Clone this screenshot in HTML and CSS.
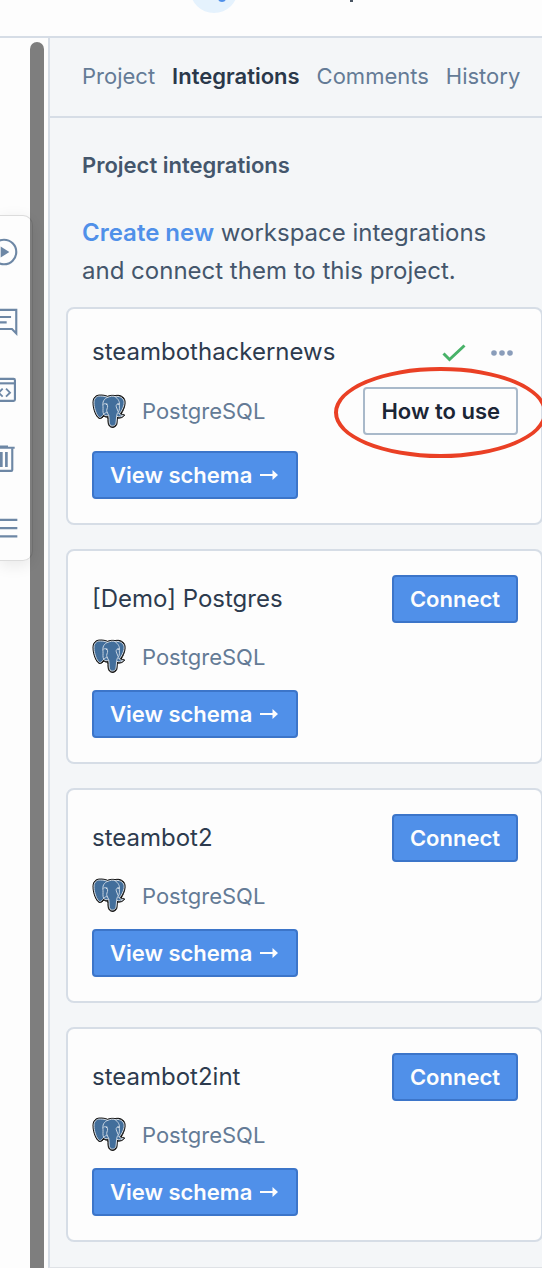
FILE: index.html
```html
<!DOCTYPE html>
<html lang="en">
<head>
<meta charset="utf-8">
<meta name="viewport" content="width=device-width, initial-scale=1">
<title>Project integrations</title>
<link rel="stylesheet" href="styles.css">
</head>
<body>
<svg class="defs" aria-hidden="true">
  <symbol id="postgres" viewBox="0 0 102 105">
    <path fill="#111" stroke="#111" stroke-width="3" stroke-linejoin="round" d="M25 3C9 3 2 13 3 29C4 47 12 68 21 73C27 76 33 69 36 66C38 69 43 70 47 69C49 79 46 91 53 97C61 104 73 99 75 89L76 72C84 74 94 70 98 63C95 60 91 62 87 61C94 50 101 34 99 21C97 8 83 1 69 5C63 3 53 4 47 7C40 4 32 3 25 3Z"/>
    <path fill="#426e9b" stroke="#d5dee8" stroke-width="3" stroke-linejoin="round" d="M25 6C11 6 5 15 6 29C7 45 14 65 22 70C27 72 31 65 35 61C39 66 44 66 50 64C53 76 49 87 55 94C61 99 71 95 72 87L74 67C83 70 90 68 94 64C89 64 84 64 82 60C90 50 98 33 96 22C94 11 81 5 69 8C62 5 54 7 47 10C40 7 32 6 25 6Z"/>
    <g fill="none" stroke="#c6d3e0" stroke-width="3" stroke-linecap="round" stroke-linejoin="round">
      <path d="M47 10C35 15 31 24 33 37C34 47 31 53 35 61M33 31C39 27 46 29 47 36C47 43 42 47 45 54L50 64M35 61C39 56 43 55 46 56"/>
      <path d="M69 8C79 14 84 24 82 34C82 41 84 47 78 56L82 60M82 32C75 28 71 32 73 39L78 52M74 67C75 60 75 57 78 56"/>
    </g>
    <path fill="#e9eef4" d="M40 29L47 29L45 34ZM75 29L81 28L79 33Z"/>
  </symbol>
  <symbol id="arrow" viewBox="0 0 18 12">
    <path d="M0 5.100H12.500V1L18 6L12.500 11V6.900H0Z"/>
  </symbol>
</svg>

<header class="topbar">
  <div class="avatar"><span class="avatar-mark"></span></div>
  <span class="topbar-mark"></span>
</header>

<div class="workspace">
  <div class="canvas">
    <nav class="toolbar" aria-label="Cell actions">
      <button class="tool" aria-label="Run"><svg viewBox="0 0 24 24"><circle cx="12" cy="12" r="9.200" fill="none" stroke="currentColor" stroke-width="1.600"/><path d="M9.500 7.800v8.400l6.500-4.200z"/></svg></button>
      <button class="tool" aria-label="Comment"><svg viewBox="0 0 24 24"><path d="M2.800 3.700H21.200V21.300L18 18H2.800ZM6 9H17.300M6 13H14" fill="none" stroke="currentColor" stroke-width="1.600"/></svg></button>
      <button class="tool" aria-label="Code"><svg viewBox="0 0 24 24"><g fill="none" stroke="currentColor" stroke-width="1.600"><rect x="3.700" y="3.700" width="16.500" height="16.500" rx="1"/><path d="M3.700 7H20.200"/><path d="M11 11L8 14L11 17M13.500 11L16.500 14L13.500 17" stroke-width="1.400"/></g></svg></button>
      <button class="tool" aria-label="Delete"><svg viewBox="0 0 24 24"><path d="M9 1.900h6v1h5v1.500H4V2.900h5zM9 6.800h2v11.200H9zM12.800 6.800h2v11.200h-2z"/><path d="M5.800 4v16.200q0 .7.7.7h11q.7 0 .7-.7V4" fill="none" stroke="currentColor" stroke-width="1.600"/></svg></button>
      <button class="tool" aria-label="Menu"><svg viewBox="0 0 24 24"><path d="M2 5h20v1.700H2zm0 6.200h20v1.700H2zm0 6.200h20v1.700H2z"/></svg></button>
    </nav>
    <div class="scrollbar"></div>
  </div>

  <aside class="panel">
    <nav class="tabs">
      <a class="tab" href="#project">Project</a>
      <a class="tab tab-active" href="#integrations" aria-current="page">Integrations</a>
      <a class="tab" href="#comments">Comments</a>
      <a class="tab" href="#history">History</a>
    </nav>

    <main class="content">
      <div class="intro">
        <h1 class="heading">Project integrations</h1>
        <p class="lead"><a class="link" href="#new">Create new</a> workspace integrations and connect them to this project.</p>
      </div>

      <section class="card">
        <div class="row">
          <h2 class="name">steambothackernews</h2>
          <div class="status">
            <svg class="check" viewBox="0 0 24 18" role="img" aria-label="Connected"><path d="M1.500 9.500L7.500 15.500L22.500 1.500"/></svg>
            <button class="more" aria-label="More options"><svg viewBox="0 0 22 6"><circle cx="3" cy="3" r="2.800"/><circle cx="11" cy="3" r="2.800"/><circle cx="19" cy="3" r="2.800"/></svg></button>
          </div>
        </div>
        <div class="row">
          <div class="kind"><svg class="logo" aria-hidden="true"><use href="#postgres"/></svg>PostgreSQL</div>
          <div class="marked"><button class="btn btn-plain">How to use</button><span class="ring"></span></div>
        </div>
        <button class="btn">View schema<svg class="arrow" aria-hidden="true"><use href="#arrow"/></svg></button>
      </section>

      <section class="card">
        <div class="row"><h2 class="name">[Demo] Postgres</h2><button class="btn">Connect</button></div>
        <div class="kind"><svg class="logo" aria-hidden="true"><use href="#postgres"/></svg>PostgreSQL</div>
        <button class="btn">View schema<svg class="arrow" aria-hidden="true"><use href="#arrow"/></svg></button>
      </section>

      <section class="card">
        <div class="row"><h2 class="name">steambot2</h2><button class="btn">Connect</button></div>
        <div class="kind"><svg class="logo" aria-hidden="true"><use href="#postgres"/></svg>PostgreSQL</div>
        <button class="btn">View schema<svg class="arrow" aria-hidden="true"><use href="#arrow"/></svg></button>
      </section>

      <section class="card">
        <div class="row"><h2 class="name">steambot2int</h2><button class="btn">Connect</button></div>
        <div class="kind"><svg class="logo" aria-hidden="true"><use href="#postgres"/></svg>PostgreSQL</div>
        <button class="btn">View schema<svg class="arrow" aria-hidden="true"><use href="#arrow"/></svg></button>
      </section>
    </main>
  </aside>
</div>
</body>
</html>
```
FILE: styles.css
```css
* { box-sizing: border-box; }

body {
  margin: 0;
  min-height: 100vh;
  display: flex;
  flex-direction: column;
  overflow-x: hidden;
  background: #fdfdfd;
  color: #2d3b4e;
  font-family: Inter, "Liberation Sans", sans-serif;
  font-size: 22px;
  font-optical-sizing: none;
}

h1, h2, p { margin: 0; }
button { font: inherit; cursor: pointer; }
a { text-decoration: none; }
.defs { position: absolute; width: 0; height: 0; }

.topbar {
  position: relative;
  height: 38px;
  border-bottom: 2px solid #d6dde6;
  overflow: hidden;
}
.avatar {
  position: absolute;
  left: 190px;
  top: -35px;
  width: 48px;
  height: 48px;
  border-radius: 50%;
  background: #e5f2fd;
}
.avatar-mark {
  position: absolute;
  left: 28px;
  top: 29px;
  width: 8px;
  height: 8px;
  border-radius: 50%;
  background: #5090e9;
}
.topbar-mark {
  position: absolute;
  left: 350px;
  top: 0;
  width: 3px;
  height: 2px;
  background: #4a5563;
}

.workspace { display: flex; flex: 1; }

.canvas {
  position: relative;
  flex: 0 0 48px;
  overflow: hidden;
}
.toolbar {
  display: flex;
  flex-direction: column;
  align-items: flex-end;
  gap: 37px;
  width: 33px;
  margin-top: 177px;
  padding: 20px 12px 16px 0;
  border: 1px solid #dcdcdc;
  border-left: 0;
  border-radius: 0 10px 10px 0;
  background: #fdfdfd;
  box-shadow: 0 4px 16px rgba(0, 0, 0, 0.09);
}
.tool {
  width: 32px;
  height: 32px;
  padding: 0;
  border: 0;
  background: none;
  color: #6d87a5;
}
.tool svg { display: block; width: 32px; height: 32px; fill: currentColor; }
.scrollbar {
  position: absolute;
  top: 4px;
  bottom: 0;
  right: 4px;
  width: 14px;
  border-radius: 7px 7px 0 0;
  background: rgba(0, 0, 0, 0.5);
}

.panel {
  flex: 1;
  min-width: 0;
  border-left: 2px solid #d6dde6;
  border-bottom: 1px solid #dfe2e6;
  background: #f4f6f8;
}
.tabs {
  display: flex;
  align-items: center;
  gap: 17px;
  height: 80px;
  padding: 0 0 2px 32px;
  border-bottom: 2px solid #d6dde6;
}
.tab { color: #647b96; }
.tab-active { color: #2a384a; font-weight: 600; }

.content {
  display: flex;
  flex-direction: column;
  gap: 24px;
  padding: 32px 0 24px 16px;
}
.intro { padding: 0 16px; margin-bottom: -7px; }
.heading {
  margin-bottom: 34px;
  color: #44566c;
  font-size: 22px;
  line-height: 30px;
  font-weight: 600;
}
.lead {
  max-width: 420px;
  color: #44566c;
  font-size: 24px;
  line-height: 38px;
}
.link { color: #5090e9; font-weight: 600; }

.card {
  display: flex;
  flex-direction: column;
  align-items: flex-start;
  gap: 16px;
  margin-right: -1px;
  padding: 24px 23px 24px 24px;
  border: 2px solid #d6dde6;
  border-radius: 8px;
  background: #fdfdfd;
}
.row {
  display: flex;
  align-items: center;
  justify-content: space-between;
  width: 100%;
}
.name { font-size: 24px; line-height: 38px; font-weight: 400; }
.kind {
  display: flex;
  align-items: center;
  gap: 16px;
  height: 35px;
  color: #647b96;
}
.logo { width: 34px; height: 35px; }
.status { display: flex; align-items: center; gap: 25px; padding: 1px 5px 0 0; }
.check { width: 24px; height: 18px; fill: none; stroke: #48b268; stroke-width: 3; }
.more { padding: 0; border: 0; background: none; }
.more svg { display: block; width: 22px; height: 6px; fill: #8a9dba; }

.btn {
  display: flex;
  align-items: center;
  gap: 8px;
  height: 48px;
  padding: 0 16px;
  border: 2px solid #3c75c9;
  border-radius: 4px;
  background: #5090e9;
  color: #fdfdfd;
  font-weight: 600;
  white-space: nowrap;
}
.btn-plain {
  border-color: #a9b9ca;
  background: #fdfdfd;
  color: #1b2636;
}
.arrow { width: 18px; height: 12px; margin-right: 2px; fill: currentColor; }
.marked { position: relative; }
.ring {
  position: absolute;
  inset: -20px -29px -23px;
  border: 4px solid #ea4025;
  border-radius: 50%;
  pointer-events: none;
}
```
